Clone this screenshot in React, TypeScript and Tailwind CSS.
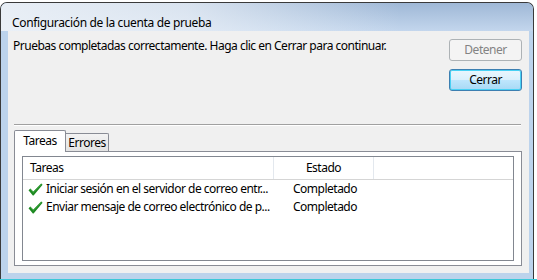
import React from "react";

function Check() {
  return (
    <svg width="15" height="13" viewBox="0 0 15 13" className="shrink-0">
      <path d="M0.5 7.2 L2.4 5.6 L5.3 8.6 L13.2 0.6 L14.6 1.8 L5.6 12.4 L4.8 12.4 Z" fill="#1e8a22" />
      <path d="M2.4 6.4 L5.3 9.3 L13.4 1.3" stroke="#4fb54f" strokeWidth="0.6" fill="none" />
    </svg>
  );
}

export default function App() {
  const font = { fontFamily: '"Noto Sans", "Open Sans", sans-serif' };
  return (
    <div className="w-[537px] h-[280px] bg-white flex flex-col overflow-hidden text-[12px] tracking-[-0.5px] text-black" style={font}>
      <div className="h-[2px] shrink-0" />
      <div className="w-[534px] h-[277px] shrink-0 flex flex-col border border-b-0 border-[#3a3a3a] rounded-t-[7px] bg-[#bcd3ec] overflow-hidden">
        <div className="h-[28px] shrink-0 pl-[11px] pt-[12px] leading-[16px] tracking-[-0.35px] whitespace-nowrap bg-[linear-gradient(to_right,rgba(236,241,247,0.95),rgba(236,241,247,0.75)_35%,rgba(236,241,247,0)_75%),linear-gradient(to_bottom,#9fb8d6,#c3d6ed)]">
          Configuración de la cuenta de prueba
        </div>
        <div className="ml-[7px] w-[521px] h-[242px] shrink-0 bg-[#f0f0f0] flex flex-col">
          <div className="flex justify-between h-[62px] shrink-0">
            <div className="pl-[5px] pt-[7px] leading-[16px] whitespace-nowrap">
              Pruebas completadas correctamente. Haga clic en Cerrar para continuar.
            </div>
            <div className="flex flex-col gap-[8px] pt-[8px] pr-[7px]">
              <div className="w-[73px] h-[22px] rounded-[3px] border border-[#adb2b5] bg-[#f4f4f4] text-[#838383] flex items-center justify-center leading-[16px]">
                Detener
              </div>
              <div className="w-[73px] h-[22px] rounded-[3px] border border-[#3c7fb1] bg-[linear-gradient(to_bottom,#eaf6fd_0%,#d9f0fc_50%,#bee6fd_51%,#a7d9f5_100%)] shadow-[inset_0_0_0_1px_#48d1f4] flex items-center justify-center leading-[16px]">
                Cerrar
              </div>
            </div>
          </div>
          <div className="h-[31px] shrink-0" />
          <div className="ml-[6px] mr-[8px] h-[2px] shrink-0 border-t border-[#a0a0a0] border-b border-b-white" />
          <div className="h-[3px] shrink-0" />
          <div className="ml-[6px] mr-[7px] flex flex-col h-[137px] shrink-0">
            <div className="flex items-end h-[22px] shrink-0 relative z-10">
              <div className="w-[52px] h-[22px] border border-b-0 border-[#898c95] rounded-t-[2px] bg-white flex items-start justify-center pt-[2px] leading-[16px] -mb-px">
                Tareas
              </div>
              <div className="w-[43px] h-[18px] border border-l-0 border-b-0 border-[#898c95] rounded-tr-[2px] bg-[linear-gradient(to_bottom,#f3f3f3,#e3e3e3)] flex items-center justify-center leading-[16px]">
                Errores
              </div>
            </div>
            <div className="h-[116px] border border-[#898c95] bg-white px-[7px] pt-[4px] pb-[4px] flex">
              <div className="flex-1 border border-[#828790] bg-white flex flex-col">
                <div className="h-[23px] shrink-0 flex border-b border-[#d5d5d5] leading-[16px]">
                  <div className="w-[251px] pl-[7px] flex items-center border-r border-[#e3e8ee]">Tareas</div>
                  <div className="w-[100px] flex items-center justify-center border-r border-[#e3e8ee]">Estado</div>
                  <div className="flex-1" />
                </div>
                <div className="h-[18px] flex items-center leading-[16px] whitespace-nowrap">
                  <div className="w-[252px] pl-[5px] flex items-center gap-[3px]">
                    <Check />
                    <span>Iniciar sesión en el servidor de correo entr...</span>
                  </div>
                  <div className="pl-[18px]">Completado</div>
                </div>
                <div className="h-[18px] flex items-center leading-[16px] whitespace-nowrap">
                  <div className="w-[252px] pl-[5px] flex items-center gap-[3px]">
                    <Check />
                    <span>Enviar mensaje de correo electrónico de p...</span>
                  </div>
                  <div className="pl-[18px]">Completado</div>
                </div>
              </div>
            </div>
          </div>
        </div>
      </div>
      <div className="h-[1px] shrink-0 bg-[#3cc8d8]" />
    </div>
  );
}
